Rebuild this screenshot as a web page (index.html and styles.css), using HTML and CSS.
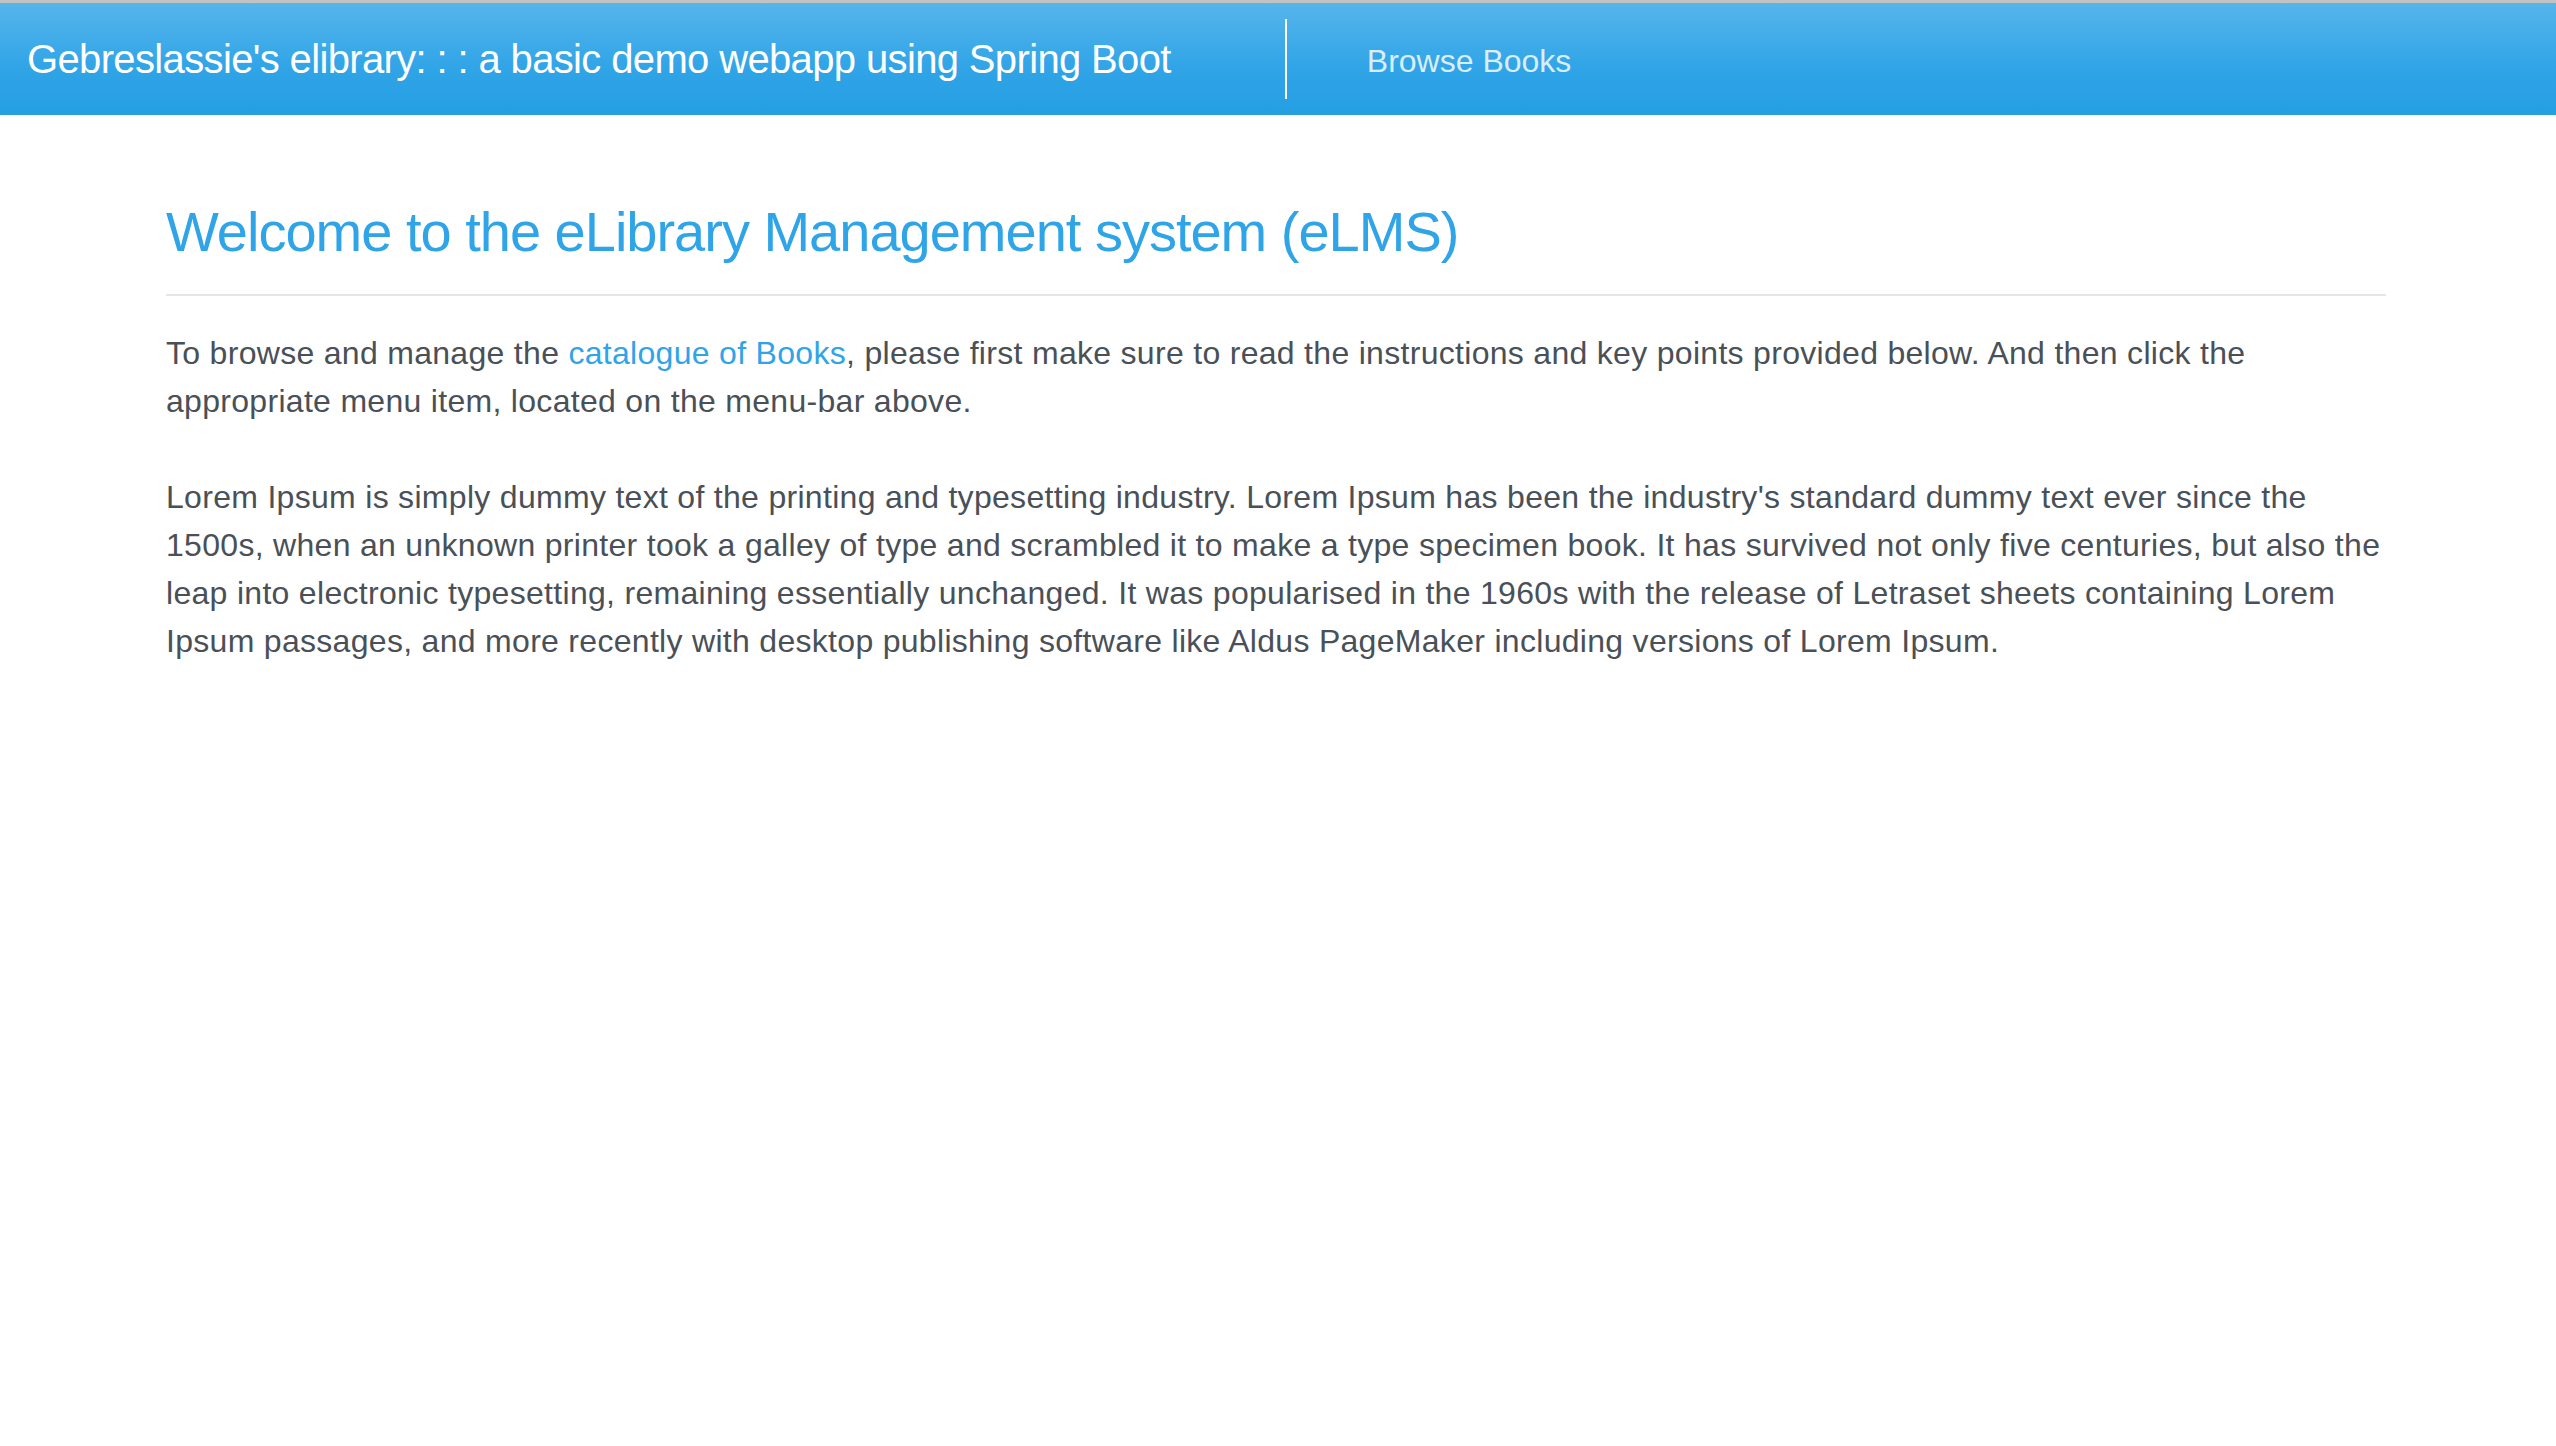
FILE: index.html
```html
<!DOCTYPE html>
<html lang="en">
<head>
<meta charset="utf-8">
<title>eLibrary</title>
<link rel="stylesheet" href="styles.css">
</head>
<body>
<div class="topline"></div>
<nav class="navbar">
  <a class="brand" href="#">Gebreslassie's elibrary: : : a basic demo webapp using Spring Boot</a>
  <span class="divider"></span>
  <a class="nav-link" href="#">Browse Books</a>
</nav>
<main class="container">
  <h3 class="title">Welcome to the eLibrary Management system (eLMS)</h3>
  <hr class="rule">
  <p class="text">To browse and manage the <a class="link" href="#">catalogue of Books</a>, please first make sure to read the instructions and key points provided below. And then click the appropriate menu item, located on the menu-bar above.</p>
  <p class="text">Lorem Ipsum is simply dummy text of the printing and typesetting industry. Lorem Ipsum has been the industry's standard dummy text ever since the 1500s, when an unknown printer took a galley of type and scrambled it to make a type specimen book. It has survived not only five centuries, but also the leap into electronic typesetting, remaining essentially unchanged. It was popularised in the 1960s with the release of Letraset sheets containing Lorem Ipsum passages, and more recently with desktop publishing software like Aldus PageMaker including versions of Lorem Ipsum.</p>
</main>
</body>
</html>
```
FILE: styles.css
```css
html, body {
  margin: 0;
  padding: 0;
  background: #ffffff;
}
body {
  font-family: "Liberation Sans", Arial, Helvetica, sans-serif;
  color: #495057;
}
.topline {
  height: 3px;
  background: #c2c2c2;
}
.navbar {
  display: flex;
  align-items: center;
  height: 112px;
  background-image: linear-gradient(#56b5eb, #2fa4e7 60%, #259fe2);
}
.brand {
  font-size: 40px;
  line-height: 60px;
  letter-spacing: -0.64px;
  color: #ffffff;
  text-decoration: none;
  padding-left: 27px;
  white-space: nowrap;
}
.divider {
  width: 2px;
  height: 80px;
  background: #ffffff;
  margin-left: 114px;
}
.nav-link {
  font-size: 32px;
  line-height: 48px;
  padding-top: 4px;
  margin-left: 80px;
  color: rgba(255, 255, 255, 0.82);
  text-decoration: none;
}
.container {
  width: 2220px;
  margin-left: 166px;
  padding-top: 83px;
}
.title {
  margin: 0;
  font-size: 56px;
  line-height: 67px;
  font-weight: 500;
  letter-spacing: -1px;
  color: #2fa4e7;
}
.rule {
  margin: 29px 0 33px 0;
  border: 0;
  height: 2px;
  background: #e6e6e6;
}
.text {
  margin: 0 0 48px 0;
  font-size: 32px;
  line-height: 48px;
  letter-spacing: 0.3px;
}
.link {
  color: #2fa4e7;
  text-decoration: none;
}
```
